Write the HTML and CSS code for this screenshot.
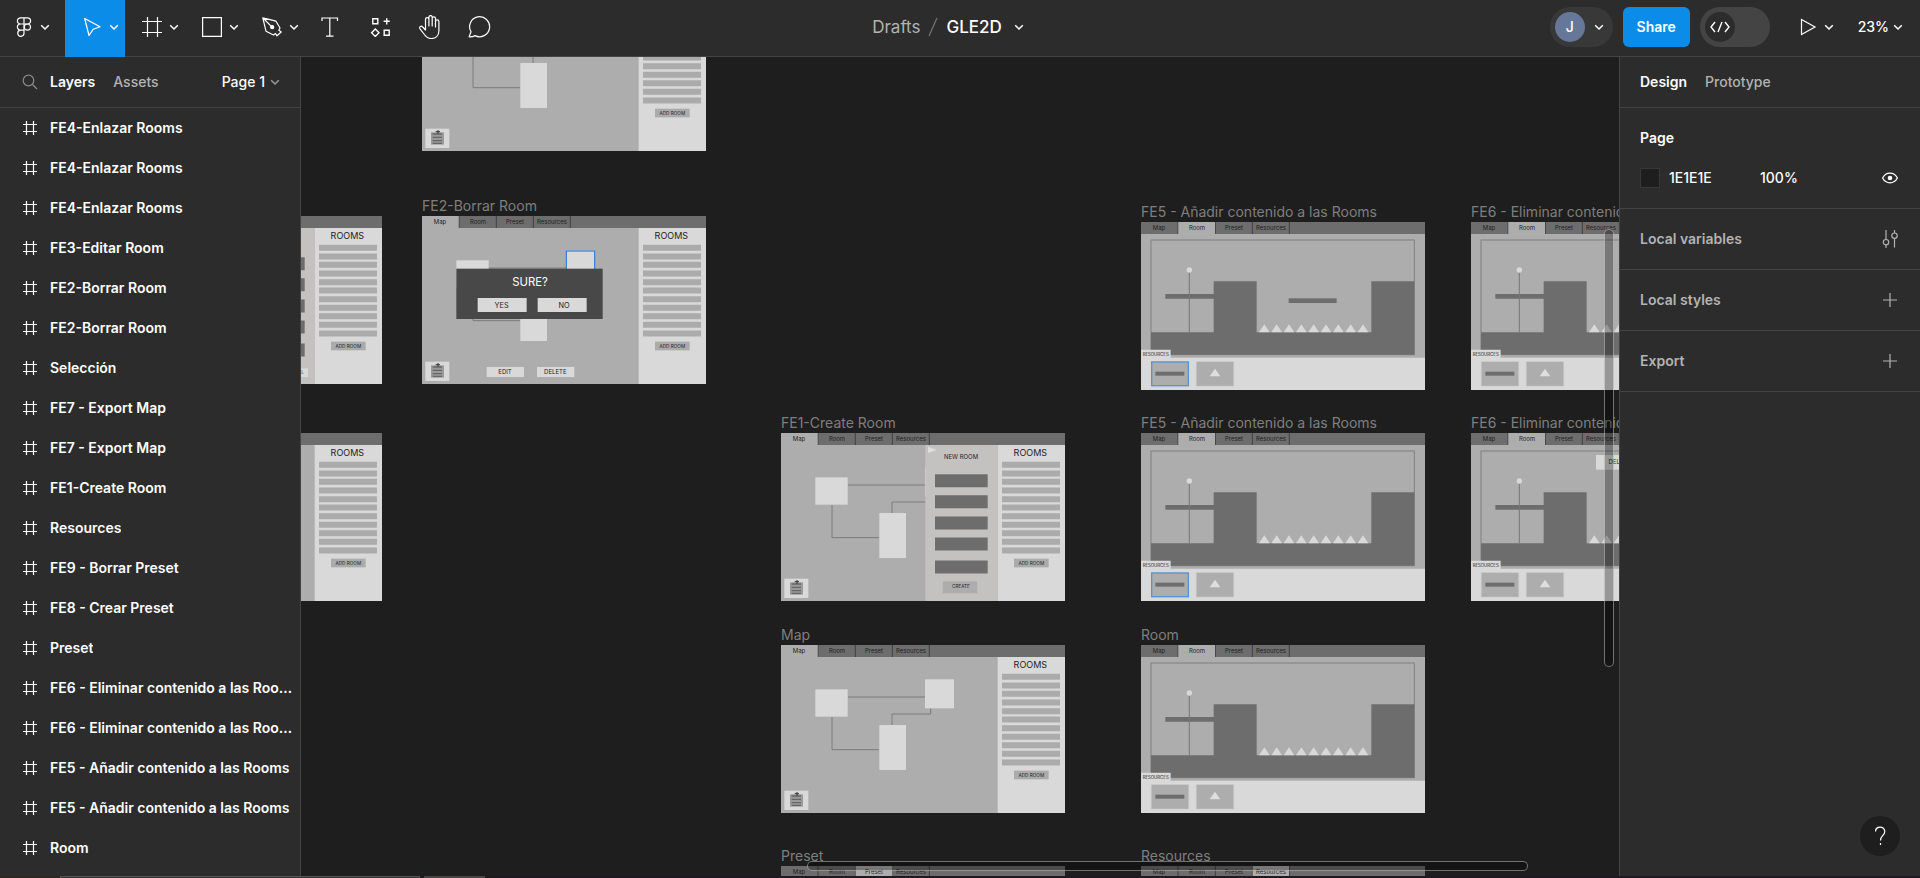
FILE: index.html
```
<!DOCTYPE html>
<html lang="es">
<head>
<meta charset="utf-8">
<title>GLE2D</title>
<link rel="stylesheet" href="styles.css">
</head>
<body>
<svg class="defs" aria-hidden="true">
  <symbol id="caret" viewBox="0 0 10 10"><path d="M1.2 3.2 5 7 8.800 3.200"/></symbol>
  <symbol id="hash" viewBox="0 0 16 16"><path d="M4.500 1v14M11.500 1v14M1 4.500h14M1 11.500h14"/></symbol>
  <symbol id="plus" viewBox="0 0 16 16"><path d="M8 1v14M1 8h14"/></symbol>

  <symbol id="tabs" viewBox="0 0 852 504">
    <rect width="852" height="36" fill="#6d6d6d"/>
    <path d="M111 0v36M223 0v36M334 0v36M445 0v36" stroke="#424242" stroke-width="3"/>
  </symbol>
  <symbol id="tab-text" viewBox="0 0 852 504">
    <g class="ink t18"><text x="54" y="25">Map</text><text x="168" y="25">Room</text><text x="279" y="25">Preset</text><text x="390" y="25">Resources</text></g>
  </symbol>
  <symbol id="rooms-side" viewBox="0 0 852 504">
    <rect x="650" y="36" width="202" height="468" fill="#d9d9d9"/>
    <text class="ink t27" x="748" y="69">ROOMS</text>
    <path d="M663 95.500H837M663 121.500H837M663 146.500H837M663 172.500H837M663 198.500H837M663 223.500H837M663 249.500H837M663 275.500H837M663 300.500H837M663 326.500H837M663 352.500H837" stroke="#ababab" stroke-width="18"/>
    <rect x="699" y="377" width="104" height="26" fill="#ababab"/>
    <text class="ink t14" x="751" y="395">ADD ROOM</text>
  </symbol>
  <symbol id="map-base" viewBox="0 0 852 504">
    <rect width="852" height="504" fill="#adadad"/>
    <path d="M200 156H432M153 216V314H294M333 240V207H449V190" fill="none" stroke="#7c7c7c" stroke-width="3"/>
    <g fill="#d9d9d9"><rect x="103" y="133" width="97" height="82"/><rect x="432" y="103" width="87" height="87"/><rect x="295" y="240" width="80" height="135"/><rect x="10" y="437" width="72" height="58"/></g>
    <rect x="27" y="448" width="39" height="37" fill="#9a9a9a"/>
    <path d="M32 453H60M32 463H60M32 473H60M32 481H60" stroke="#676767" stroke-width="4"/>
    <path d="M41 446H54M48 441V452" stroke="#333" stroke-width="3"/>
  </symbol>
  <symbol id="map-empty" viewBox="0 0 852 504">
    <rect width="852" height="504" fill="#adadad"/><use href="#tabs"/><use href="#rooms-side"/>
  </symbol>
  <symbol id="map" viewBox="0 0 852 504">
    <use href="#map-base"/><use href="#tabs"/><rect width="110" height="37" fill="#adadad"/><use href="#tab-text"/><use href="#rooms-side"/>
  </symbol>
  <symbol id="new-room" viewBox="0 0 852 504">
    <rect x="433" y="36" width="217" height="468" fill="#c4c1c1"/>
    <path d="M462 143H620M462 206H620M462 270H620M462 333H620M462 402H620" stroke="#6d6d6d" stroke-width="39"/>
  </symbol>
  <symbol id="room-base" viewBox="0 0 852 504">
    <rect width="852" height="504" fill="#adadad"/>
    <use href="#tabs"/><rect x="112" width="110" height="37" fill="#adadad"/><use href="#tab-text"/>
    <rect x="30" y="54" width="790" height="344" fill="none" stroke="#808080" stroke-width="3"/>
    <path d="M30 331H218V178H347V331H691V178H820V398H30zM73 216H219V230H73z" fill="#6d6d6d"/>
    <path d="M145 150V331" stroke="#777" stroke-width="3"/>
    <circle cx="145" cy="144" r="8" fill="#d9d9d9"/>
    <path d="M354 331l16-24 16 24zM391 331l16-24 16 24zM428 331l16-24 16 24zM465 331l16-24 16 24zM502 331l16-24 16 24zM539 331l16-24 16 24zM576 331l16-24 16 24zM613 331l16-24 16 24zM650 331l16-24 16 24zM0 407V383H89V407H852V504H0z" fill="#d9d9d9"/>
    <text class="ink t13" x="44" y="402">RESOURCES</text>
    <path d="M31 419H143V492H31zM166 419H278V492H166z" fill="#adadad" stroke="#c6c6c6" stroke-width="2"/>
    <rect x="43" y="449" width="87" height="12" fill="#6d6d6d"/>
    <path d="M206 463 222 440 238 463z" fill="#dedede"/>
  </symbol>
</svg>

<div class="app">
  <header class="toolbar">
    <nav class="tools" aria-label="Tools">
      <button class="tool menu" aria-label="Main menu">
        <svg class="i20" viewBox="0 0 20 20"><path d="M10 .8H6.500a3.100 3.100 0 0 0 0 6.200H10zM10 .8h3.500a3.100 3.100 0 0 1 0 6.200H10zM10 7H6.500a3.100 3.100 0 0 0 0 6.200H10zM10 13.200H6.500A3.100 3.100 0 1 0 10 16.200z"/><circle cx="13.400" cy="10.100" r="3.100"/></svg>
        <svg class="caret"><use href="#caret"/></svg>
      </button>
      <button class="tool active" aria-label="Move">
        <svg class="i20" viewBox="0 0 20 20"><path d="M2.700 1.500 18 9.800 11.200 12.200 7 18.500z" stroke-linejoin="round"/></svg>
        <svg class="caret"><use href="#caret"/></svg>
      </button>
      <button class="tool" aria-label="Frame">
        <svg class="i20" viewBox="0 0 20 20"><path d="M5.500 0v20M15.500 0v20M0 4.500h20M0 15.500h20"/></svg>
        <svg class="caret"><use href="#caret"/></svg>
      </button>
      <button class="tool" aria-label="Rectangle">
        <svg class="i20" viewBox="0 0 20 20"><path d="M.6.600h18.800v18.800H.6z"/></svg>
        <svg class="caret"><use href="#caret"/></svg>
      </button>
      <button class="tool" aria-label="Pen">
        <svg class="i20" viewBox="0 0 20 20"><path d="M.8.800 4 14.200 11.500 18 13.500 16.500 15 18.800 19.200 15 16.800 13.300 18 11 14 4.200zM.8.800 9.500 9.500" stroke-linejoin="round"/><circle cx="10.200" cy="10.200" r="1.500" fill="#fff"/></svg>
        <svg class="caret"><use href="#caret"/></svg>
      </button>
      <button class="tool single" aria-label="Text">
        <svg class="i20" viewBox="0 0 20 20"><path d="M2 4V1h15.500v3M9.800 1v18M6 19.200h7.500"/></svg>
      </button>
      <button class="tool single" aria-label="Resources">
        <svg class="i20" viewBox="0 0 20 20"><path d="M2.800 1.800h5v5h-5zM14.200 13.200h5v5h-5zM5.300 12 9 15.700 5.300 19.400 1.600 15.700zM16.700 1.200v6.200M13.600 4.300h6.200" stroke-width="1.400"/></svg>
      </button>
      <button class="tool single" aria-label="Hand">
        <svg class="i24" viewBox="0 0 24 24"><path d="M7.500 14V4.300a1.700 1.700 0 0 1 3.400 0V11 2.200a1.600 1.600 0 0 1 3.300 0V11 3.500a1.600 1.600 0 0 1 3.300 0V12 6.500a1.700 1.700 0 0 1 3.400 0V15.500c0 5-3 8-7.500 8-3.500 0-5.500-1.500-7-4L2 13.800c-1.200-2.300 1.300-3.500 2.700-1.800L7.500 15z" stroke-linejoin="round"/></svg>
      </button>
      <button class="tool single" aria-label="Comment">
        <svg class="i24" viewBox="0 0 24 24"><path d="M1.200 21.800 3 16.800A10 10 0 1 1 7 20.600 10 10 0 0 1 1.200 21.800z" stroke-linejoin="round"/></svg>
      </button>
    </nav>
    <div class="title">
      <a class="folder" href="#">Drafts</a><svg class="slash" viewBox="0 0 10 20"><path d="M1 19 9 1"/></svg><button class="file">GLE2D <svg class="caret"><use href="#caret"/></svg></button>
    </div>
    <div class="actions">
      <button class="user"><span class="avatar">J</span><svg class="caret"><use href="#caret"/></svg></button>
      <button class="share">Share</button>
      <button class="devmode" aria-label="Dev mode"><span class="knob"><svg class="i20" viewBox="0 0 20 20"><path d="M5 5 1 10 5 15M15 5 19 10 15 15M12 5 8 15" stroke-width="1.400"/></svg></span></button>
      <button class="play" aria-label="Present"><svg class="i20" viewBox="0 0 20 20"><path d="M3.500 2.500 17 10 3.500 17.500z"/></svg><svg class="caret"><use href="#caret"/></svg></button>
      <button class="zoom">23% <svg class="caret"><use href="#caret"/></svg></button>
    </div>
  </header>

  <aside class="layers">
    <div class="tabrow">
      <svg class="search" viewBox="0 0 16 16"><circle cx="6.500" cy="6.500" r="5.300"/><path d="M10.500 10.500 15 15"/></svg>
      <button class="tab on">Layers</button>
      <button class="tab">Assets</button>
      <button class="tab page">Page 1 <svg class="caret"><use href="#caret"/></svg></button>
    </div>
    <ul class="list">
      <li><svg><use href="#hash"/></svg><span>FE4-Enlazar Rooms</span></li>
      <li><svg><use href="#hash"/></svg><span>FE4-Enlazar Rooms</span></li>
      <li><svg><use href="#hash"/></svg><span>FE4-Enlazar Rooms</span></li>
      <li><svg><use href="#hash"/></svg><span>FE3-Editar Room</span></li>
      <li><svg><use href="#hash"/></svg><span>FE2-Borrar Room</span></li>
      <li><svg><use href="#hash"/></svg><span>FE2-Borrar Room</span></li>
      <li><svg><use href="#hash"/></svg><span>Selección</span></li>
      <li><svg><use href="#hash"/></svg><span>FE7 - Export Map</span></li>
      <li><svg><use href="#hash"/></svg><span>FE7 - Export Map</span></li>
      <li><svg><use href="#hash"/></svg><span>FE1-Create Room</span></li>
      <li><svg><use href="#hash"/></svg><span>Resources</span></li>
      <li><svg><use href="#hash"/></svg><span>FE9 - Borrar Preset</span></li>
      <li><svg><use href="#hash"/></svg><span>FE8 - Crear Preset</span></li>
      <li><svg><use href="#hash"/></svg><span>Preset</span></li>
      <li><svg><use href="#hash"/></svg><span>FE6 - Eliminar contenido a las Rooms</span></li>
      <li><svg><use href="#hash"/></svg><span>FE6 - Eliminar contenido a las Rooms</span></li>
      <li><svg><use href="#hash"/></svg><span>FE5 - Añadir contenido a las Rooms</span></li>
      <li><svg><use href="#hash"/></svg><span>FE5 - Añadir contenido a las Rooms</span></li>
      <li><svg><use href="#hash"/></svg><span>Room</span></li>
    </ul>
  </aside>

  <main class="canvas">
    <div class="board cut-top"><svg viewBox="0 222 852 282"><use href="#map-base" width="852" height="504"/><use href="#rooms-side" width="852" height="504"/></svg></div>
    <div class="board cut-left r1"><svg viewBox="609 0 243 504"><use href="#map-empty" width="852" height="504"/><use href="#new-room" width="852" height="504"/><rect x="600" y="457" width="30" height="26" fill="#d9d9d9"/><text class="ink t14" x="614" y="475">L</text></svg></div>
    <div class="board cut-left r2"><svg viewBox="609 0 243 504"><use href="#map-empty" width="852" height="504"/></svg></div>
    <figure class="board c2 r1"><figcaption>FE2-Borrar Room</figcaption><svg viewBox="0 0 852 504"><use href="#map"/>
      <rect x="433" y="105" width="85" height="80" fill="#d9d9d9" stroke="#1f6fd0" stroke-width="3"/>
      <rect x="103" y="158" width="439" height="151" fill="#484848"/>
      <text class="light t34" x="324" y="211">SURE?</text>
      <path d="M167 246H314V288H167zM347 246H494V288H347zM194 453H306V483H194zM345 453H457V483H345z" fill="#d9d9d9"/>
      <text class="ink t24" x="239" y="275">YES</text><text class="ink t24" x="426" y="275">NO</text>
      <text class="ink t18" x="249" y="474">EDIT</text><text class="ink t18" x="400" y="474">DELETE</text></svg></figure>
    <figure class="board c3 r2"><figcaption>FE1-Create Room</figcaption><svg viewBox="0 0 852 504"><use href="#map"/><use href="#new-room"/><path d="M441 41 467 51 441 60z" fill="#dedede"/><text class="ink t18" x="540" y="78">NEW ROOM</text><rect x="485" y="445" width="104" height="36" fill="#adadad"/><text class="ink t14" x="540" y="465">CREATE</text></svg></figure>
    <figure class="board c3 r3"><figcaption>Map</figcaption><svg viewBox="0 0 852 504"><use href="#map"/></svg></figure>
    <figure class="board c3 r4"><figcaption>Preset</figcaption><svg viewBox="0 0 852 504"><use href="#map-base"/><use href="#tabs"/><rect x="224" width="110" height="37" fill="#adadad"/><use href="#tab-text"/></svg></figure>
    <figure class="board c4 r1b"><figcaption>FE5 - Añadir contenido a las Rooms</figcaption><svg viewBox="0 0 852 504"><use href="#room-base"/><rect x="443" y="229" width="144" height="14" fill="#6d6d6d"/><rect x="32" y="420" width="110" height="71" fill="none" stroke="#5a93d8" stroke-width="4"/></svg></figure>
    <figure class="board c4 r2"><figcaption>FE5 - Añadir contenido a las Rooms</figcaption><svg viewBox="0 0 852 504"><use href="#room-base"/><rect x="32" y="420" width="110" height="71" fill="none" stroke="#5a93d8" stroke-width="4"/></svg></figure>
    <figure class="board c4 r3"><figcaption>Room</figcaption><svg viewBox="0 0 852 504"><use href="#room-base"/></svg></figure>
    <figure class="board c4 r4"><figcaption>Resources</figcaption><svg viewBox="0 0 852 504"><use href="#map-base"/><use href="#tabs"/><rect x="335" width="109" height="37" fill="#adadad"/><use href="#tab-text"/></svg></figure>
    <figure class="board c5 r1b"><figcaption>FE6 - Eliminar contenido a las Rooms</figcaption><svg viewBox="0 0 852 504"><use href="#room-base"/></svg></figure>
    <figure class="board c5 r2"><figcaption>FE6 - Eliminar contenido a las Rooms</figcaption><svg viewBox="0 0 852 504"><use href="#room-base"/><rect x="375" y="66" width="140" height="44" fill="#d9d9d9"/><text class="ink t18" x="446" y="93">DELETE</text></svg></figure>
    <div class="scroll vertical"></div>
    <div class="scroll horizontal"></div>
  </main>

  <aside class="design">
    <div class="tabrow">
      <button class="tab on">Design</button>
      <button class="tab">Prototype</button>
    </div>
    <section class="pageprops">
      <h2>Page</h2>
      <div class="fill">
        <span class="swatch"></span>
        <input class="hex" aria-label="Page colour" value="1E1E1E">
        <input class="opacity" aria-label="Opacity" value="100%">
        <button class="iconbtn bright" aria-label="Toggle visibility"><svg class="i16" viewBox="0 0 16 16"><path d="M.6 8C4 1.600 12 1.600 15.400 8 12 14.400 4 14.400.6 8z" stroke-width="1.300"/><circle cx="8" cy="8" r="2.300" fill="#fff" stroke="none"/></svg></button>
      </div>
    </section>
    <section class="prop"><h2>Local variables</h2><button class="iconbtn" aria-label="Open variables"><svg class="i18" viewBox="0 0 18 18"><path d="M5 0v9.500M5 15v3M13.500 0v3M13.500 8.500v9"/><circle cx="5" cy="12.200" r="2.700"/><circle cx="13.500" cy="5.700" r="2.700"/></svg></button></section>
    <section class="prop"><h2>Local styles</h2><button class="iconbtn" aria-label="Add style"><svg class="i16"><use href="#plus"/></svg></button></section>
    <section class="prop"><h2>Export</h2><button class="iconbtn" aria-label="Add export"><svg class="i16"><use href="#plus"/></svg></button></section>
    <button class="help" aria-label="Help"><svg class="i20" viewBox="0 0 20 20"><path d="M5.500 5.500C5.500-.3 14.800-.3 14.800 5.500 14.800 9.500 10.500 9.500 10.500 14.500M10.500 17v2"/></svg></button>
  </aside>

  <footer class="strip"><span class="warm"></span><span class="mid"></span><span class="pale"></span></footer>
</div>
</body>
</html>
```
FILE: styles.css
```
* { box-sizing: border-box; }
body { margin: 0; background: #1e1e1e; color: #fff; font: 500 14px/20px Inter, "Liberation Sans", sans-serif; }
button, input { font: inherit; color: inherit; background: none; border: 0; padding: 0; margin: 0; }
a { color: inherit; text-decoration: none; }
h2 { margin: 0; font-size: 14px; font-weight: 600; }
svg { display: block; flex: none; fill: none; stroke: currentColor; stroke-width: 1.2; }
.defs { position: absolute; width: 0; height: 0; }
.caret { width: 10px; height: 10px; stroke-width: 1.5; }
.i16 { width: 16px; height: 16px; }
.i18 { width: 18px; height: 18px; }
.i20 { width: 20px; height: 20px; }
.i24 { width: 24px; height: 24px; }

.app { height: 100vh; display: grid; grid-template: auto minmax(0, 1fr) 2px / 301px minmax(0, 1fr) 301px; overflow: hidden; }

.toolbar { grid-column: 1 / -1; display: grid; grid-template-columns: 1fr auto 1fr; height: 57px; background: #2c2c2c; border-bottom: 1px solid #444; }
.tools { display: flex; height: 57px; }
.tool { display: flex; align-items: center; gap: 7px; width: 60px; padding: 0 0 4px 17px; }
.tool.menu { width: 65px; padding-left: 14px; gap: 6px; }
.tool.active { background: #0c8ce9; }
.tool.single { width: 50px; padding-left: 0; justify-content: center; }

.title { display: flex; align-items: center; gap: 8px; padding: 0 24px 4px 0; font-size: 17px; font-weight: 400; }
.folder { color: #b3b3b3; }
.slash { width: 10px; height: 20px; color: #777; }
.file { display: flex; align-items: center; gap: 12px; font-weight: 500; }

.actions { display: flex; justify-content: flex-end; align-items: center; padding: 0 17px 4px 0; }
.user { display: flex; align-items: center; gap: 9px; width: 63px; height: 40px; padding-left: 5px; border-radius: 20px; background: #383838; margin-right: 10px; }
.avatar { width: 30px; height: 30px; border-radius: 50%; background: #667799; line-height: 30px; }
.share { width: 67px; height: 40px; border-radius: 6px; background: #0c8ce9; margin-right: 10px; font-weight: 600; }
.devmode { width: 70px; height: 40px; padding: 5px; border-radius: 20px; background: #444; margin-right: 28px; }
.knob { display: grid; place-items: center; width: 30px; height: 30px; border-radius: 50%; background: #2c2c2c; }
.play { display: flex; align-items: center; gap: 6px; margin-right: 24px; }
.zoom { display: flex; align-items: center; gap: 4px; }

.tabrow { display: flex; align-items: center; height: 51px; border-bottom: 1px solid #444; }
.tab { color: #b3b3b3; font-weight: 500; }
.tab.on { color: #fff; font-weight: 600; }

.layers { background: #2c2c2c; border-right: 1px solid #444; min-width: 0; }
.layers .tabrow { padding: 0 20px 0 22px; }
.layers .tab + .tab { margin-left: 18px; }
.search { width: 16px; height: 16px; margin-right: 12px; color: #8a8a8a; }
.layers .page.tab { display: flex; align-items: center; gap: 5px; margin-left: auto; color: #fff; }
.page .caret { color: #999; }
.list { list-style: none; margin: 0; padding: 0; }
.list li { display: flex; align-items: center; gap: 12px; height: 40px; padding: 0 6px 0 22px; font-weight: 600; }
.list svg { width: 16px; height: 16px; }
.list span { overflow: hidden; text-overflow: ellipsis; white-space: nowrap; }

.canvas { position: relative; overflow: hidden; background: #1e1e1e; }
.board { position: absolute; width: 284px; margin: 0; }
.board figcaption { height: 20px; line-height: 20px; font-weight: 400; color: #7e7e7e; white-space: nowrap; }
.board svg { width: 284px; height: 168px; stroke: none; }
.cut-top { left: 121px; top: 0; }
.cut-top svg { height: 94px; }
.cut-left { left: 0; width: 81px; padding-top: 20px; }
.cut-left svg { width: 81px; }
.c2 { left: 121px; }
.c3 { left: 480px; }
.c4 { left: 840px; }
.c5 { left: 1170px; }
.r1 { top: 139px; }
.r1b { top: 145px; }
.r2 { top: 356px; }
.r3 { top: 568px; }
.r4 { top: 789px; }
text { font-weight: 400; text-anchor: middle; stroke: none; }
.ink { fill: #1e1e1e; }
.light { fill: #fff; }
.t13 { font-size: 13px; }
.t14 { font-size: 14px; }
.t18 { font-size: 18px; }
.t24 { font-size: 22px; }
.t27 { font-size: 27px; }
.t34 { font-size: 34px; }
.scroll { position: absolute; border: 1px solid rgba(255, 255, 255, .4); border-radius: 5px; background: rgba(0, 0, 0, .3); }
.vertical { right: 5px; top: 172px; width: 10px; height: 438px; }
.horizontal { left: 506px; bottom: 5px; width: 721px; height: 10px; }

.design { position: relative; background: #2c2c2c; border-left: 1px solid #444; }
.design .tabrow { gap: 18px; padding: 0 20px; }
.pageprops { padding: 20px; height: 101px; border-bottom: 1px solid #444; }
.fill { display: flex; align-items: center; height: 20px; margin-top: 20px; }
.swatch { width: 20px; height: 20px; background: #1e1e1e; border: 1px solid #383838; margin-right: 9px; }
.hex { width: 91px; }
.opacity { width: 60px; }
.iconbtn { display: grid; place-items: center; width: 20px; height: 20px; margin-left: auto; color: #b3b3b3; }
.bright { color: #fff; }
.prop { display: flex; align-items: center; height: 61px; padding: 0 20px; border-bottom: 1px solid #444; color: #b3b3b3; }
.help { position: absolute; right: 20px; bottom: 20px; display: grid; place-items: center; width: 40px; height: 40px; border-radius: 50%; background: #1e1e1e; }

.strip { grid-column: 1 / -1; display: flex; background: #1f1a22; }
.warm { width: 60px; background: #30271f; }
.mid { width: 360px; background: #333; border: 1px solid #555; border-bottom: 0; }
.pale { width: 61px; margin-left: 4px; background: #4a4644; }
```
